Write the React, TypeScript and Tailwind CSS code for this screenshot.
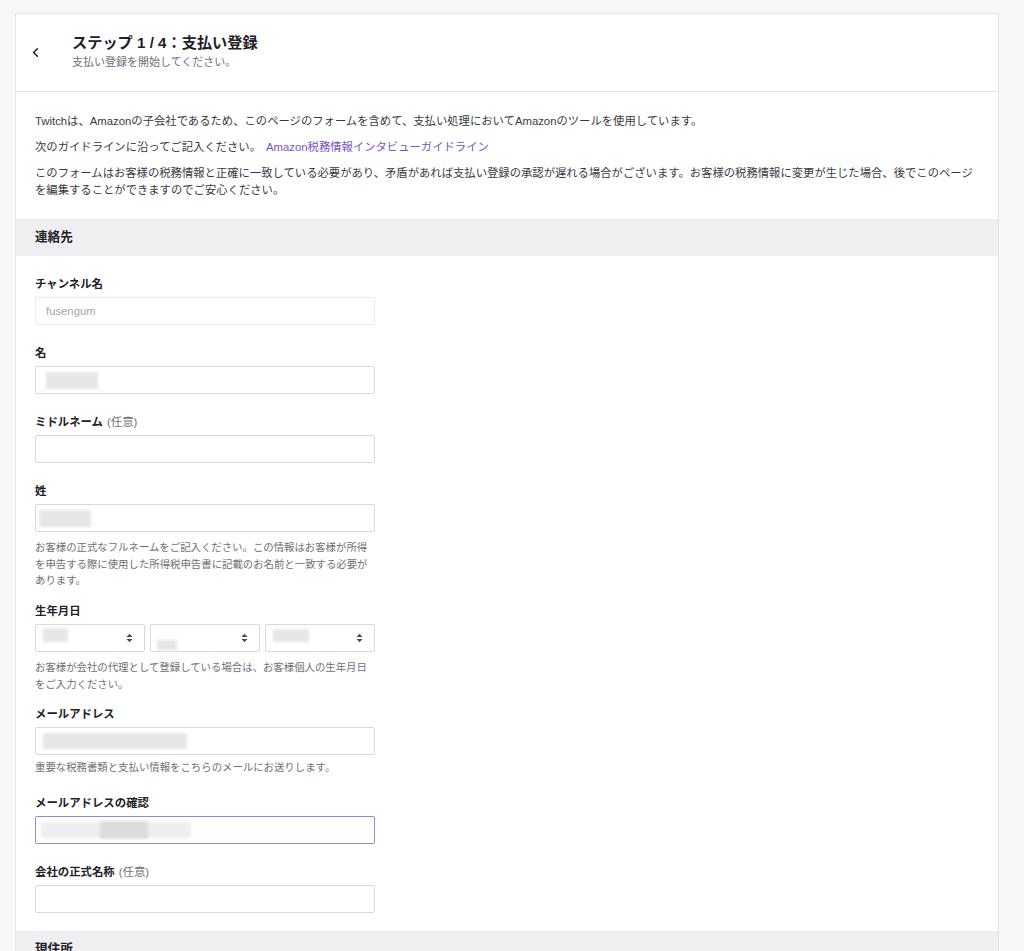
import { ChevronLeft } from 'lucide-react';
import type { ReactNode } from 'react';

const font = { fontFamily: '"Liberation Sans", "Noto Sans CJK JP", sans-serif' };

// blurred block standing in for redacted personal data
function Redacted({ className }: { className: string }) {
  return <div className={`shrink-0 bg-[#e6e6e8] blur-[1.5px] ${className}`} />;
}

function Label({ text, optional }: { text: string; optional?: boolean }) {
  return (
    <div className="h-[17px] leading-[17px] mb-[4px] text-[11.4px] font-bold text-[#232127]">
      {text}
      {optional && <span className="font-normal text-[#6f6f75] ml-1">(任意)</span>}
    </div>
  );
}

function Field({ label, optional, children, help, className }: {
  label: string;
  optional?: boolean;
  children: ReactNode;
  help?: ReactNode;
  className: string;
}) {
  return (
    <div className={className}>
      <Label text={label} optional={optional} />
      {children}
      {help}
    </div>
  );
}

function Help({ children, className = 'mt-[8px]' }: { children: ReactNode; className?: string }) {
  return <p className={`${className} w-[340px] text-[10.4px] leading-[16.7px] text-[#6f6f75]`}>{children}</p>;
}

function Input({ children, focused, disabled }: { children?: ReactNode; focused?: boolean; disabled?: boolean }) {
  return (
    <div
      className={`w-[340px] h-[28px] rounded-[2px] bg-white border flex items-center ${
        focused ? 'border-[#9a85d0]' : disabled ? 'border-[#ebebed]' : 'border-[#d9d9dc]'
      }`}
    >
      {children}
    </div>
  );
}

function Arrows() {
  return (
    <svg width="7" height="10" viewBox="0 0 7 10" className="shrink-0">
      <path d="M0.5 4 L3.5 0.8 L6.5 4 Z" fill="#4a4a4f" />
      <path d="M0.5 6 L3.5 9.2 L6.5 6 Z" fill="#4a4a4f" />
    </svg>
  );
}

function Select({ children, className = 'items-start pt-[3px]' }: { children?: ReactNode; className?: string }) {
  return (
    <div className="w-[110px] h-[28px] rounded-[2px] bg-white border border-[#d9d9dc] flex justify-between pl-[6px] pr-[11px]">
      <div className={`flex h-full ${className}`}>{children}</div>
      <div className="flex items-center">
        <Arrows />
      </div>
    </div>
  );
}

function SectionBar({ title }: { title: string }) {
  return (
    <div className="h-[37px] bg-[#efeff1] px-[19px] flex items-center text-[12.6px] font-bold text-[#232127]">
      {title}
    </div>
  );
}

export default function App() {
  return (
    <div className="min-h-[951px] bg-[#f7f7f8] pt-[13px] pl-[15px] overflow-hidden" style={font}>
      <div className="w-[984px] bg-white border border-[#e4e4e6] border-b-0">
        {/* Header */}
        <div className="h-[78px] flex items-center border-b border-[#e4e4e6]">
          <div className="w-[56px] flex pl-[12px]">
            <ChevronLeft className="w-[15px] h-[15px] text-[#1f1f23]" strokeWidth={2.4} />
          </div>
          <div className="pb-[2px]">
            <div className="text-[15.2px] font-bold text-[#232127] leading-[20px]">ステップ 1 / 4：支払い登録</div>
            <div className="text-[11px] text-[#6f6f75] leading-[16px] mt-[1px]">支払い登録を開始してください。</div>
          </div>
        </div>

        {/* Intro */}
        <div className="px-[19px] pt-[21px] pb-[20px] text-[11.33px] leading-[17px] text-[#3a3a3d]">
          <p>Twitchは、Amazonの子会社であるため、このページのフォームを含めて、支払い処理においてAmazonのツールを使用しています。</p>
          <p className="mt-[9px]">
            次のガイドラインに沿ってご記入ください。
            <span className="text-[#7356c0] ml-[5px]">Amazon税務情報インタビューガイドライン</span>
          </p>
          <p className="mt-[9px] pr-[4px]">
            このフォームはお客様の税務情報と正確に一致している必要があり、矛盾があれば支払い登録の承認が遅れる場合がございます。お客様の税務情報に変更が生じた場合、後でこのページを編集することができますのでご安心ください。
          </p>
        </div>

        <SectionBar title="連絡先" />

        <div className="px-[19px] pt-[20px]">
          <Field label="チャンネル名" className="mb-[20px]">
            <Input disabled>
              <span className="pl-[10px] text-[11.3px] text-[#a5a5aa]">fusengum</span>
            </Input>
          </Field>
          <Field label="名" className="mb-[20px]">
            <Input>
              <Redacted className="ml-[10px] w-[52px] h-[17px]" />
            </Input>
          </Field>
          <Field label="ミドルネーム" optional className="mb-[20px]">
            <Input />
          </Field>
          <Field
            label="姓"
            className="mb-[13px]"
            help={
              <Help>
                お客様の正式なフルネームをご記入ください。この情報はお客様が所得を申告する際に使用した所得税申告書に記載のお名前と一致する必要があります。
              </Help>
            }
          >
            <Input>
              <Redacted className="ml-[3px] w-[52px] h-[17px]" />
            </Input>
          </Field>
          <Field
            label="生年月日"
            className="mb-[12px]"
            help={<Help>お客様が会社の代理として登録している場合は、お客様個人の生年月日をご入力ください。</Help>}
          >
            <div className="flex gap-[5px]">
              <Select>
                <Redacted className="ml-[1px] w-[25px] h-[14px]" />
              </Select>
              <Select className="items-end pb-[1px]">
                <Redacted className="w-[20px] h-[10px]" />
              </Select>
              <Select>
                <Redacted className="ml-[1px] mt-[1px] w-[36px] h-[13px]" />
              </Select>
            </div>
          </Field>
          <Field
            label="メールアドレス"
            className="mb-[19px]"
            help={<Help className="mt-[5px]">重要な税務書類と支払い情報をこちらのメールにお送りします。</Help>}
          >
            <Input>
              <Redacted className="ml-[7px] w-[144px] h-[16px]" />
            </Input>
          </Field>
          <Field label="メールアドレスの確認" className="mb-[20px]">
            <Input focused>
              <div className="flex ml-[5px] blur-[1.5px]">
                <div className="w-[59px] h-[16px] mt-[1px] bg-[#eeeef0]" />
                <div className="w-[48px] h-[18px] bg-[#dcdcde]" />
                <div className="w-[43px] h-[16px] mt-[1px] bg-[#eeeef0]" />
              </div>
            </Input>
          </Field>
          <Field label="会社の正式名称" optional className="mb-[18px]">
            <Input />
          </Field>
        </div>

        <SectionBar title="現住所" />
      </div>
    </div>
  );
}
